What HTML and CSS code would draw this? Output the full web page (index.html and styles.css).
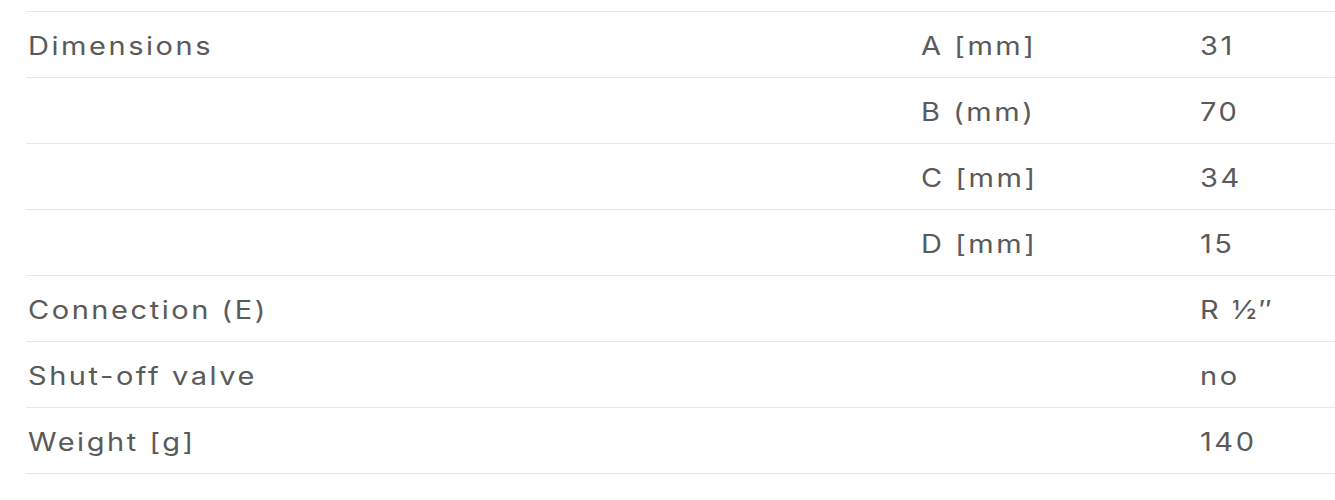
FILE: index.html
```html
<!DOCTYPE html>
<html>
<head>
<meta charset="utf-8">
<link rel="stylesheet" href="styles.css">
</head>
<body>
<div class="specs">
  <div class="row"><div class="c1"><span class="t">Dimensions</span></div><div class="c2"><span class="t">A [mm]</span></div><div class="c3"><span class="t">31</span></div></div>
  <div class="row"><div class="c1"></div><div class="c2"><span class="t">B (mm)</span></div><div class="c3"><span class="t">70</span></div></div>
  <div class="row"><div class="c1"></div><div class="c2"><span class="t">C [mm]</span></div><div class="c3"><span class="t">34</span></div></div>
  <div class="row"><div class="c1"></div><div class="c2"><span class="t">D [mm]</span></div><div class="c3"><span class="t">15</span></div></div>
  <div class="row"><div class="c1"><span class="t">Connection (E)</span></div><div class="c2"></div><div class="c3"><span class="t">R ½″</span></div></div>
  <div class="row"><div class="c1"><span class="t">Shut-off valve</span></div><div class="c2"></div><div class="c3"><span class="t">no</span></div></div>
  <div class="row"><div class="c1"><span class="t">Weight [g]</span></div><div class="c2"></div><div class="c3"><span class="t">140</span></div></div>
</div>
</body>
</html>
```

FILE: styles.css
```css
html, body {
  margin: 0;
  padding: 0;
  background: #fff;
}
body {
  padding: 11px 0 0 26px;
  font-family: Inter, "Open Sans", sans-serif;
  color: #5a5a5a;
}
.specs {
  border-bottom: 1px solid #e6e6e6;
}
.row {
  display: grid;
  grid-template-columns: 895px 279px 1fr;
  border-top: 1px solid #e6e6e6;
  align-items: center;
  font-size: 25px;
  letter-spacing: 2.2px;
  padding-top: 2px;
  box-sizing: border-box;
  height: 66px;
}
.t {
  display: inline-block;
  transform: scaleX(1.16);
  transform-origin: left center;
}
.c1 { padding-left: 2px; }
```
